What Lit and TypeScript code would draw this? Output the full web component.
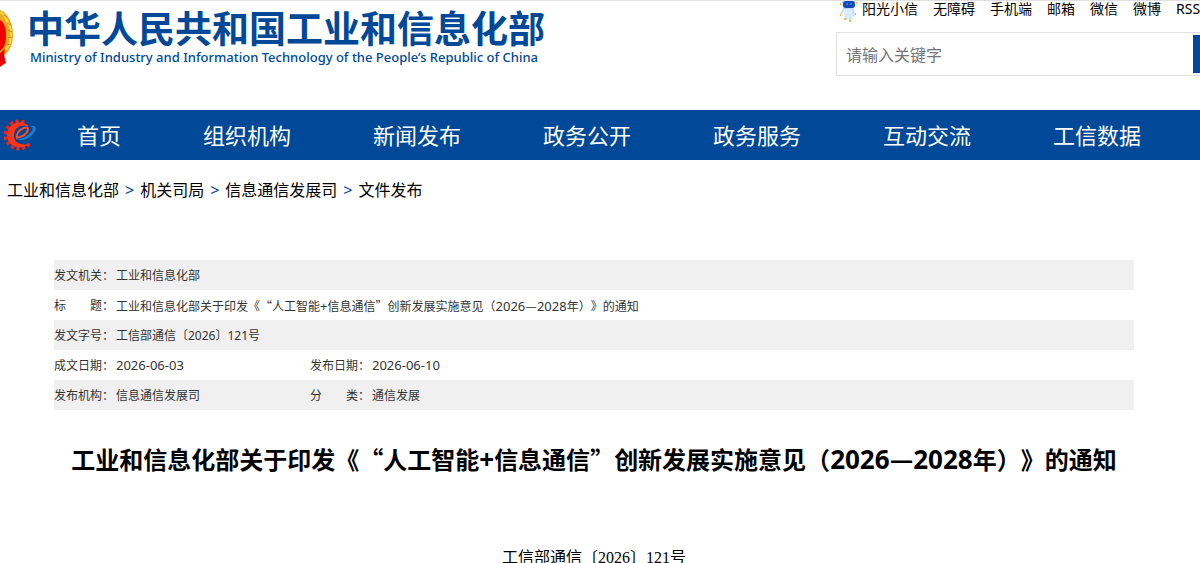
import { LitElement, html, css, svg } from "lit";
import { customElement } from "lit/decorators.js";

const QUICK_LINKS = ["阳光小信", "无障碍", "手机端", "邮箱", "微信", "微博", "RSS"];
const NAV = ["首页", "组织机构", "新闻发布", "政务公开", "政务服务", "互动交流", "工信数据"];
const CRUMBS = ["工业和信息化部", "机关司局", "信息通信发展司", "文件发布"];

@customElement("app-root")
export class AppRoot extends LitElement {
  static styles = css`
    :host {
      display: block;
      overflow: hidden;
      background: #fff;
      color: #000;
      font-family: "Noto Sans", "Noto Sans CJK SC", sans-serif;
      text-spacing-trim: space-all;
    }
    * {
      box-sizing: border-box;
    }
    a {
      color: inherit;
      text-decoration: none;
    }
    .cjk {
      font-family: "Noto Sans CJK SC", sans-serif;
    }

    .header {
      display: flex;
      justify-content: space-between;
      height: 110px;
      border-top: 1px solid #e0e0e0;
    }
    .brand {
      display: flex;
      gap: 13px;
      color: #004898;
      white-space: nowrap;
    }
    .emblem {
      display: block;
      width: 14px;
      height: 70px;
      flex: none;
    }
    .brand-text {
      display: flex;
      flex-direction: column;
      padding-top: 4px;
    }
    .brand-cn {
      font: bold 37px/44px "Noto Sans CJK SC", sans-serif;
    }
    .brand-en {
      padding-left: 3px;
      font: 500 13px/16px "Noto Sans", sans-serif;
    }
    .tools {
      flex: 0 0 364px;
      min-width: 0;
      overflow-x: clip;
    }
    .quick {
      display: flex;
      gap: 15px;
      height: 31px;
      padding-left: 3px;
      font-size: 14px;
      line-height: 16px;
      white-space: nowrap;
    }
    .mascot-link {
      display: flex;
      gap: 3px;
    }
    .mascot {
      width: 20px;
      height: 22px;
      flex: none;
    }
    .search {
      display: flex;
      width: 440px;
      height: 44px;
      padding: 2px;
      border: 1px solid #e0e0e0;
    }
    .search input {
      width: 354px;
      padding: 0 7px;
      border: 0;
      outline: 0;
      background: none;
      font: 16px/24px "Noto Sans CJK SC", sans-serif;
    }
    .search input::placeholder {
      color: #757575;
    }
    .search button {
      flex: 1;
      border: 0;
      background: #004898;
      color: #fff;
      font: 16px/24px "Noto Sans CJK SC", sans-serif;
    }

    .nav {
      display: flex;
      align-items: center;
      height: 50px;
      padding-right: 18px;
      background: #004898;
      color: #fff;
      font-size: 22px;
      line-height: 50px;
      text-align: center;
      white-space: nowrap;
    }
    .nav-logo {
      flex: 0 0 36px;
      height: 40px;
    }
    .nav a {
      flex: 170 1 0;
    }
    .nav a:first-of-type {
      flex-grow: 126;
    }

    .crumbs {
      display: flex;
      gap: 6px;
      padding: 18px 7px;
      font-size: 16px;
      line-height: 24px;
    }
    .sep {
      color: #004898;
    }

    .article {
      padding: 40px 66px 0 54px;
    }
    .meta {
      width: 100%;
      table-layout: fixed;
      border-collapse: collapse;
      color: #333;
      font-size: 12px;
      line-height: 20px;
      text-align: left;
    }
    .meta tr:nth-child(odd) {
      background: #f0f0f0;
    }
    .meta th,
    .meta td {
      height: 30px;
      padding: 2px 0 0;
      font-weight: normal;
      white-space: nowrap;
      vertical-align: middle;
    }
    .meta .num {
      font-size: 13px;
    }
    .meta td.num {
      padding: 0;
    }
    .label-col {
      width: 62px;
    }
    .value-col {
      width: 194px;
    }
    .title {
      margin: 30px 0 0;
      font-size: 24px;
      line-height: 36px;
      text-align: center;
      white-space: nowrap;
    }
    .title .num {
      font-size: 26px;
    }
    .doc-no {
      margin: 68px 0 0;
      font: 16px/24px "Liberation Serif", "Noto Sans CJK SC", serif;
      text-align: center;
    }
  `;

  private emblem() {
    return svg`<svg class="emblem" viewBox="0 0 14 70" aria-hidden="true">
      <path d="M0 9C7 11 13 22 13 34C13 43 10 49 4 55L0 57Z" fill="#e9a91d"/>
      <path d="M0 11L4 14L7 20L10 26L11 34L10 42L6 49" fill="none" stroke="#ffd84a" stroke-width="2"/>
      <path d="M4 14L7 16M7 22L11 24M8 29L12 31M8 37L12 36M7 44L10 43" stroke="#c98212"/>
      <path d="M0 19C4 21 6 27 6 35C6 43 4 47 0 50Z" fill="#f20000"/>
      <path d="M0 52L5 48L4 54L6 62L4 63L0 66Z" fill="#e60000"/>
    </svg>`;
  }

  private mascot() {
    return svg`<svg class="mascot" viewBox="0 0 20 22" aria-hidden="true">
      <path d="M3 0H16L15 7L13 9H6L4 7Z" fill="#b9d8f7"/>
      <rect x="4" y="0" width="12" height="7" rx="3" fill="#1149b5"/>
      <path d="M7 3H9M11 3H13" stroke="#43b6ff"/>
      <path d="M6 8H13L15 14L13 19L10 16L8 19L5 15Z" fill="#dcecff"/>
      <path d="M5 8L2 13M14 8L15 15M7 16L7 19M11 16L11 20" stroke="#c5defa" stroke-width="2"/>
      <path d="M1 3H2M17 2H18M1 14H2M16 13H17M5 18H7M10 20H12" stroke="#ffb52e" stroke-width="2"/>
    </svg>`;
  }

  private gearLogo() {
    const teeth = [50, 74, 98, 122, 146, 170, 194, 218, 242, 266, 290];
    return svg`<svg class="nav-logo" viewBox="0 0 36 40" aria-hidden="true">
      ${teeth.map((a) => svg`<rect x="31" y="18.5" width="3.4" height="3.2" fill="#f0281a" transform="rotate(${a} 19 20) translate(0 -1)"/>`)}
      <path d="M28 10C20 4 7 9 7 20C7 31 20 36 29 29C20 31 13 27 14 19C15 13 21 8 28 12Z" fill="#ff3516"/>
      <path d="M17 22C22 23 28 18 28 14C28 12 25 12 22 14C18 16 16 20 17 24" fill="none" stroke="#ff4b22" stroke-width="2"/>
      <path d="M30 11C37 10 38 14 32 20C27 25 20 27 16 23C21 25 27 22 31 17C34 14 33 12 30 11Z" fill="#1781cb"/>
    </svg>`;
  }

  private docTitle() {
    return html`工业和信息化部关于印发<span class="cjk">《“</span>人工智能<span class="num">+</span>信息通信<span class="cjk">”</span>创新发展实施意见（<span class="num">2026<span class="cjk">—</span>2028</span>年）》的通知`;
  }

  render() {
    return html`
      <header class="header">
        <a class="brand" href="#">
          ${this.emblem()}
          <span class="brand-text">
            <span class="brand-cn">中华人民共和国工业和信息化部</span>
            <span class="brand-en">Ministry of Industry and Information Technology of the People’s Republic of China</span>
          </span>
        </a>
        <div class="tools">
          <div class="quick">
            ${QUICK_LINKS.map((t, i) =>
              i === 0
                ? html`<a class="mascot-link" href="#">${this.mascot()}${t}</a>`
                : html`<a href="#">${t}</a>`
            )}
          </div>
          <form class="search">
            <input type="text" aria-label="请输入关键字" placeholder="请输入关键字" />
            <button type="button" aria-label="搜索"></button>
          </form>
        </div>
      </header>
      <nav class="nav">
        ${this.gearLogo()}
        ${NAV.map((t) => html`<a href="#">${t}</a>`)}
      </nav>
      <div class="crumbs">
        ${CRUMBS.map((t, i) => html`${i ? html`<span class="sep">&gt;</span>` : ""}<a href="#">${t}</a>`)}
      </div>
      <main class="article">
        <table class="meta">
          <colgroup>
            <col class="label-col" />
            <col class="value-col" />
            <col class="label-col" />
            <col />
          </colgroup>
          <tbody>
            <tr>
              <th scope="row">发文机关：</th>
              <td colspan="3">工业和信息化部</td>
            </tr>
            <tr>
              <th scope="row">标　　题：</th>
              <td colspan="3">${this.docTitle()}</td>
            </tr>
            <tr>
              <th scope="row">发文字号：</th>
              <td colspan="3">工信部通信〔2026〕121号</td>
            </tr>
            <tr>
              <th scope="row">成文日期：</th>
              <td class="num">2026-06-03</td>
              <th scope="row">发布日期：</th>
              <td class="num">2026-06-10</td>
            </tr>
            <tr>
              <th scope="row">发布机构：</th>
              <td>信息通信发展司</td>
              <th scope="row">分　　类：</th>
              <td>通信发展</td>
            </tr>
          </tbody>
        </table>
        <h1 class="title">${this.docTitle()}</h1>
        <p class="doc-no">工信部通信〔2026〕121号</p>
      </main>
    `;
  }
}
